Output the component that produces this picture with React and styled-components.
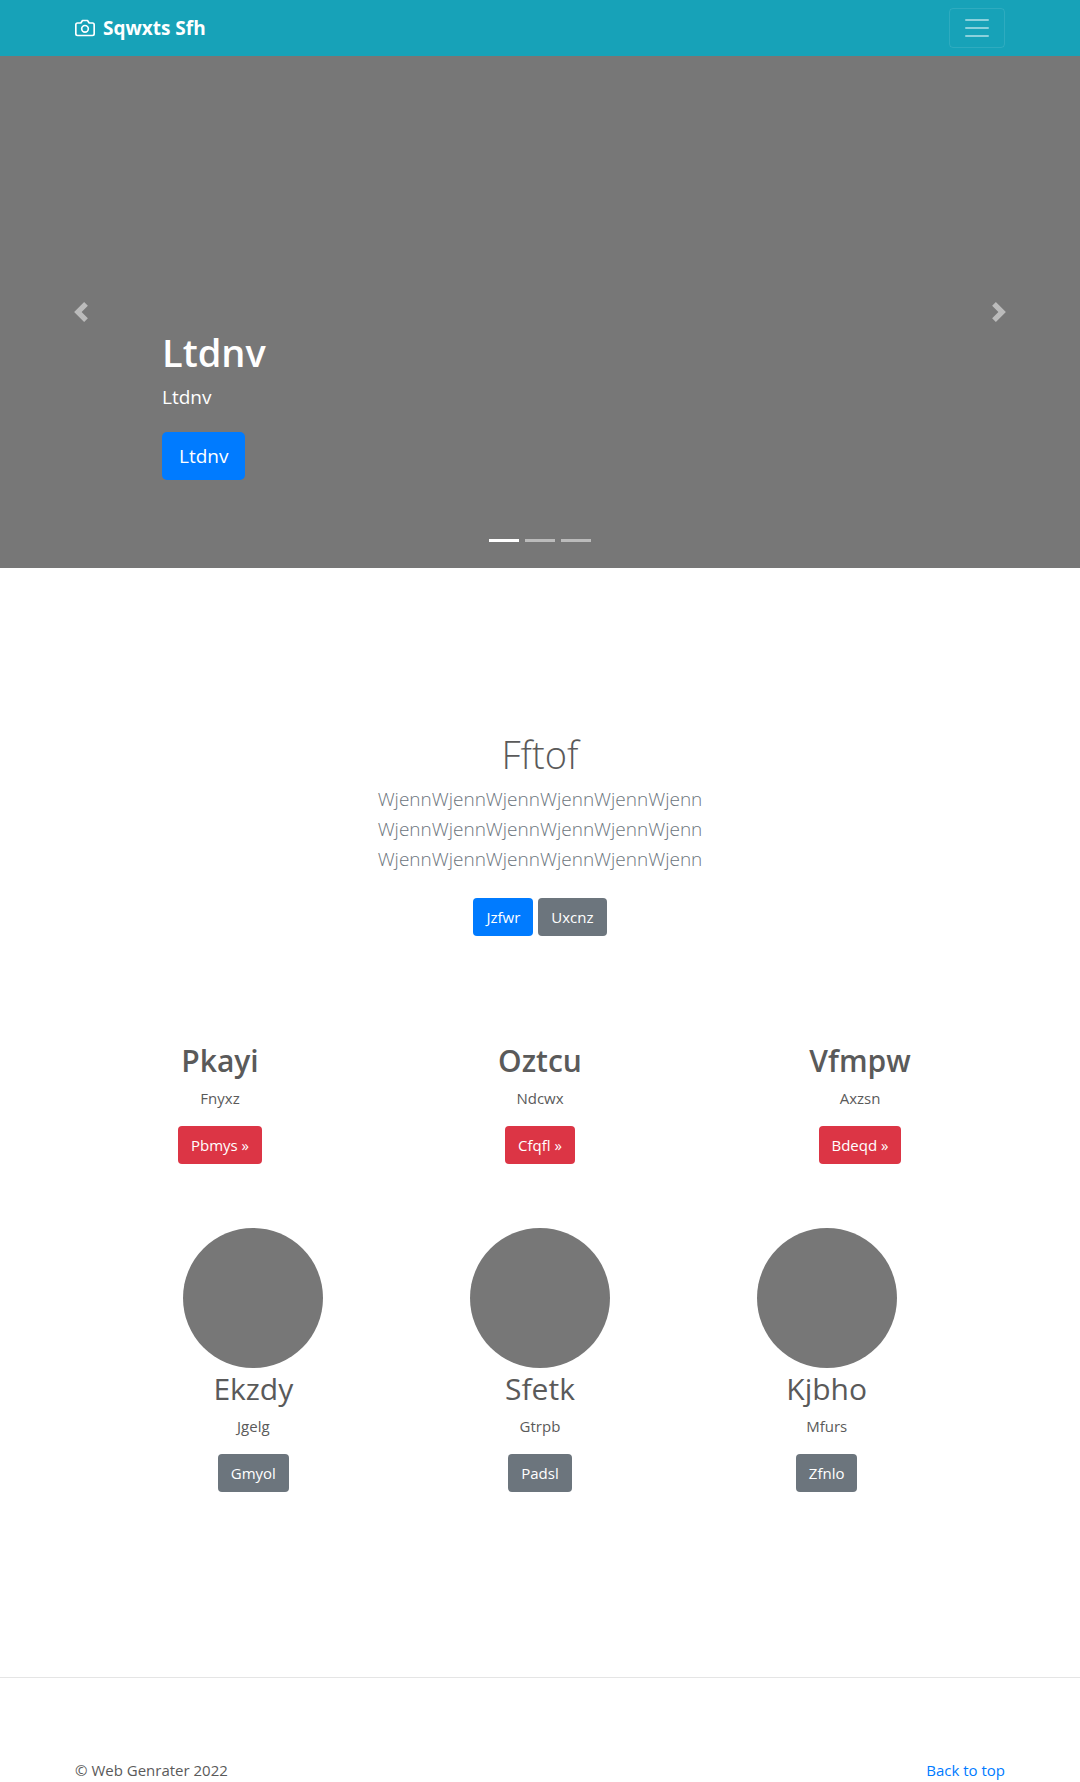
import React from "react";
import styled, { createGlobalStyle, css } from "styled-components";

const GlobalStyle = createGlobalStyle`
  *, *::before, *::after { box-sizing: border-box; }
  body {
    margin: 0;
    background: #fff;
    color: #5a5a5a;
    font-family: "Segoe UI", "Open Sans", "Noto Sans", sans-serif;
    font-size: 15px;
    line-height: 24px;
  }
  h1, h2, p { margin: 0; }
`;

const Container = styled.div`
  width: 100%;
  max-width: 960px;
  margin: 0 auto;
  padding: 0 15px;
`;

const Navbar = styled.header`
  background: #17a2b8;
  padding: 8px 0;
`;

const NavInner = styled(Container)`
  display: flex;
  align-items: center;
  justify-content: space-between;
`;

const Brand = styled.a`
  display: flex;
  align-items: center;
  gap: 8px;
  color: #fff;
  font-size: 19px;
  font-weight: 700;
  line-height: 30px;
  text-decoration: none;
`;

const Toggler = styled.button`
  display: flex;
  align-items: center;
  justify-content: center;
  width: 56px;
  height: 40px;
  padding: 0;
  color: rgba(255, 255, 255, 0.5);
  background: transparent;
  border: 1px solid rgba(255, 255, 255, 0.1);
  border-radius: 4px;
`;

const Carousel = styled.section`
  position: relative;
  height: 512px;
  margin-bottom: 64px;
  padding: 0 15% 88px;
  display: flex;
  flex-direction: column;
  justify-content: flex-end;
  align-items: flex-start;
  background: #777;
  color: #fff;
`;

const Title = styled.h1`
  margin-bottom: 4px;
  font-size: 38px;
  font-weight: ${({ $light }) => ($light ? 300 : 600)};
  line-height: 52px;
`;

const CarouselText = styled.p`
  margin-bottom: 20px;
  font-size: 19px;
  line-height: 30px;
`;

const Control = styled.button`
  position: absolute;
  top: 0;
  bottom: 0;
  ${({ $side }) => $side}: 0;
  width: 15%;
  display: flex;
  align-items: center;
  justify-content: center;
  padding: 0;
  border: 0;
  background: none;
  color: #fff;
  opacity: 0.5;
`;

const Indicators = styled.div`
  position: absolute;
  left: 0;
  right: 0;
  bottom: 16px;
  display: flex;
  justify-content: center;
  gap: 6px;
`;

const Indicator = styled.button`
  width: 30px;
  height: 23px;
  padding: 0;
  border: 0;
  border-top: 10px solid transparent;
  border-bottom: 10px solid transparent;
  background: #fff;
  background-clip: padding-box;
  opacity: ${({ $active }) => ($active ? 1 : 0.5)};
`;

const tones = { primary: "#007bff", secondary: "#6c757d", danger: "#dc3545" };

const Button = styled.a`
  display: inline-block;
  padding: 7px 13px;
  border-radius: 4px;
  background: ${({ $tone }) => tones[$tone]};
  color: #fff;
  font-size: 15px;
  line-height: 24px;
  text-align: center;
  text-decoration: none;
  ${({ $large }) =>
    $large &&
    css`
      padding: 9px 17px;
      border-radius: 5px;
      font-size: 19px;
      line-height: 30px;
    `}
`;

const Intro = styled.section`
  padding: 96px 15px;
  text-align: center;
`;

const Lead = styled.p`
  margin-bottom: 24px;
  color: #6c757d;
  font-size: 19px;
  font-weight: 300;
  line-height: 30px;
`;

const Actions = styled.div`
  display: flex;
  justify-content: center;
  gap: 5px;
  margin-bottom: 8px;
`;

const Row = styled.div`
  max-width: ${({ $width }) => $width}px;
  margin: 0 auto;
  display: grid;
  grid-template-columns: repeat(3, 1fr);
`;

const Column = styled.article`
  display: flex;
  flex-direction: column;
  align-items: center;
  margin-bottom: 64px;
  text-align: center;
`;

const Circle = styled.div`
  width: 140px;
  height: 140px;
  border-radius: 50%;
  background: #777;
`;

const ColumnTitle = styled.h2`
  margin-bottom: 4px;
  font-size: 30px;
  font-weight: ${({ $bold }) => ($bold ? 600 : 400)};
  line-height: 42px;
`;

const ColumnText = styled.p`
  margin-bottom: 16px;
`;

const Divider = styled.hr`
  margin: 121px 0 80px;
  border: 0;
  border-top: 1px solid rgba(0, 0, 0, 0.1);
`;

const Footer = styled.footer`
  width: 100%;
  max-width: 960px;
  margin: 0 auto;
  padding: 0 15px;
  display: flex;
  justify-content: space-between;
`;

const TopLink = styled.a`
  color: #007bff;
  text-decoration: none;
`;

const CameraIcon = () => (
  <svg width="20" height="20" viewBox="0 0 24 24" fill="none" stroke="currentColor" strokeWidth="2" strokeLinecap="round" strokeLinejoin="round" aria-hidden="true">
    <path d="M23 19a2 2 0 0 1-2 2H3a2 2 0 0 1-2-2V8a2 2 0 0 1 2-2h4l2-3h6l2 3h4a2 2 0 0 1 2 2z" />
    <circle cx="12" cy="13" r="4" />
  </svg>
);

const MenuIcon = () => (
  <svg width="30" height="30" viewBox="0 0 30 30" stroke="currentColor" strokeWidth="2" strokeLinecap="round" aria-hidden="true">
    <path d="M4 7h22M4 15h22M4 23h22" />
  </svg>
);

const arrows = {
  left: "M5.25 0l-4 4 4 4 1.5-1.5L4.25 4l2.5-2.5L5.25 0z",
  right: "M2.75 0l-1.5 1.5L3.75 4l-2.5 2.5L2.75 8l4-4-4-4z",
};

const Arrow = ({ side }) => (
  <svg width="20" height="20" viewBox="0 0 8 8" fill="currentColor" aria-hidden="true">
    <path d={arrows[side]} />
  </svg>
);

const features = [
  { title: "Pkayi", text: "Fnyxz", action: "Pbmys »" },
  { title: "Oztcu", text: "Ndcwx", action: "Cfqfl »" },
  { title: "Vfmpw", text: "Axzsn", action: "Bdeqd »" },
];

const people = [
  { title: "Ekzdy", text: "Jgelg", action: "Gmyol" },
  { title: "Sfetk", text: "Gtrpb", action: "Padsl" },
  { title: "Kjbho", text: "Mfurs", action: "Zfnlo" },
];

const leadLine = "Wjenn".repeat(6);

export default function App() {
  return (
    <>
      <GlobalStyle />
      <Navbar id="top">
        <NavInner>
          <Brand href="#">
            <CameraIcon />
            Sqwxts Sfh
          </Brand>
          <Toggler type="button" aria-label="Toggle navigation">
            <MenuIcon />
          </Toggler>
        </NavInner>
      </Navbar>
      <main>
        <Carousel>
          <Title>Ltdnv</Title>
          <CarouselText>Ltdnv</CarouselText>
          <Button href="#" $tone="primary" $large>Ltdnv</Button>
          <Control type="button" $side="left" aria-label="Previous">
            <Arrow side="left" />
          </Control>
          <Control type="button" $side="right" aria-label="Next">
            <Arrow side="right" />
          </Control>
          <Indicators>
            {[0, 1, 2].map((n) => (
              <Indicator key={n} type="button" $active={n === 0} aria-label={`Slide ${n + 1}`} />
            ))}
          </Indicators>
        </Carousel>

        <Intro>
          <Title $light>Fftof</Title>
          <Lead>
            {leadLine}
            <br />
            {leadLine}
            <br />
            {leadLine}
          </Lead>
          <Actions>
            <Button href="#" $tone="primary">Jzfwr</Button>
            <Button href="#" $tone="secondary">Uxcnz</Button>
          </Actions>
        </Intro>

        <Row $width={960}>
          {features.map((item) => (
            <Column key={item.title}>
              <ColumnTitle $bold>{item.title}</ColumnTitle>
              <ColumnText>{item.text}</ColumnText>
              <Button href="#" $tone="danger">{item.action}</Button>
            </Column>
          ))}
        </Row>

        <Row $width={860}>
          {people.map((item) => (
            <Column key={item.title}>
              <Circle />
              <ColumnTitle>{item.title}</ColumnTitle>
              <ColumnText>{item.text}</ColumnText>
              <Button href="#" $tone="secondary">{item.action}</Button>
            </Column>
          ))}
        </Row>
      </main>
      <Divider />
      <Footer>
        <p>© Web Genrater 2022</p>
        <TopLink href="#top">Back to top</TopLink>
      </Footer>
    </>
  );
}
